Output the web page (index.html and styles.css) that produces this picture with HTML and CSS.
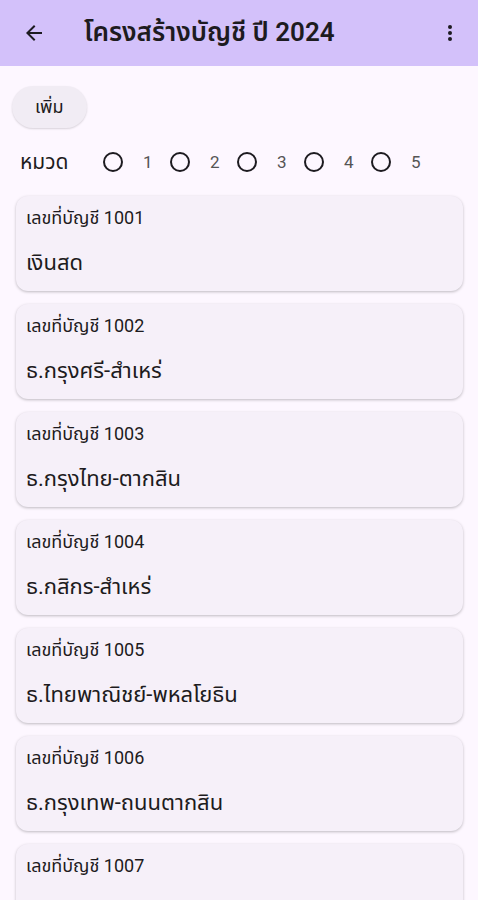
FILE: index.html
```html
<!DOCTYPE html>
<html lang="th">
<head>
    <meta charset="UTF-8">
    <meta name="viewport" content="width=device-width, initial-scale=1.0">
    <title>โครงสร้างบัญชี ปี 2024</title>
    <link rel="stylesheet" href="styles.css">
</head>
<body>
    <header class="appbar">
        <button class="icon-btn" aria-label="back">
            <svg width="24" height="24" viewBox="0 0 24 24"><path d="M20 11H7.83l5.59-5.59L12 4l-8 8 8 8 1.41-1.41L7.83 13H20v-2z" fill="#1d1b20"/></svg>
        </button>
        <h1 class="title">โครงสร้างบัญชี ปี 2024</h1>
        <button class="icon-btn more" aria-label="more">
            <svg width="24" height="24" viewBox="0 0 24 24"><circle cx="12" cy="6" r="2" fill="#1d1b20"/><circle cx="12" cy="12" r="2" fill="#1d1b20"/><circle cx="12" cy="18" r="2" fill="#1d1b20"/></svg>
        </button>
    </header>

    <main class="content">
        <button class="add-btn">เพิ่ม</button>

        <div class="category">
            <span class="cat-label">หมวด</span>
            <label class="radio"><span class="dot"></span>1</label>
            <label class="radio"><span class="dot"></span>2</label>
            <label class="radio"><span class="dot"></span>3</label>
            <label class="radio"><span class="dot"></span>4</label>
            <label class="radio"><span class="dot"></span>5</label>
        </div>

        <div class="list" id="list"></div>
    </main>

    <script>
        let accounts = [
            ["1001", "เงินสด"],
            ["1002", "ธ.กรุงศรี-สำเหร่"],
            ["1003", "ธ.กรุงไทย-ตากสิน"],
            ["1004", "ธ.กสิกร-สำเหร่"],
            ["1005", "ธ.ไทยพาณิชย์-พหลโยธิน"],
            ["1006", "ธ.กรุงเทพ-ถนนตากสิน"],
            ["1007", ""]
        ];
        let list = document.getElementById("list");
        accounts.forEach(a => {
            let card = document.createElement("div");
            card.className = "card";
            card.innerHTML = `<div class="acc-no">เลขที่บัญชี ${a[0]}</div><div class="acc-name">${a[1]}</div>`;
            list.appendChild(card);
        });
    </script>
</body>
</html>
```

FILE: styles.css
```css
body {
    margin: 0;
    background: #fdf7ff;
    font-family: Roboto, "Noto Sans", "Noto Sans Thai", sans-serif;
    color: #1d1b20;
    width: 478px;
    overflow: hidden;
}
.appbar {
    height: 66px;
    background: #d3c1fa;
    display: flex;
    align-items: center;
    padding: 0 12px 0 22px;
}
.icon-btn {
    border: none;
    background: none;
    padding: 0;
    width: 24px;
    height: 24px;
    display: flex;
}
.title {
    flex: 1;
    margin: 0 0 0 38px;
    font-size: 26px;
    font-weight: 600;
}
.more {
    margin-right: 4px;
}
.content {
    padding: 20px 15px 0 12px;
}
.add-btn {
    border: none;
    background: #f1ecf4;
    border-radius: 21px;
    height: 42px;
    padding: 0 23px;
    font-family: inherit;
    font-size: 18px;
    color: #1d1b20;
    box-shadow: 0 1px 2px rgba(0,0,0,0.15);
}
.category {
    display: flex;
    align-items: center;
    margin: 12px 0 0 8px;
    height: 44px;
    font-size: 17px;
}
.cat-label {
    font-size: 21px;
    width: 83px;
}
.radio {
    display: flex;
    align-items: center;
    gap: 20px;
    width: 67px;
    color: #555;
}
.dot {
    width: 16px;
    height: 16px;
    border: 2px solid #1d1b20;
    border-radius: 50%;
}
.list {
    display: flex;
    flex-direction: column;
    gap: 13px;
    margin: 12px 0 0 4px;
}
.card {
    background: #f6f0f9;
    border-radius: 12px;
    height: 95px;
    padding: 9px 10px 0 10px;
    box-sizing: border-box;
    box-shadow: 0 1px 3px rgba(0,0,0,0.25);
}
.acc-no {
    font-size: 18px;
    line-height: 26px;
}
.acc-name {
    font-size: 22px;
    line-height: 32px;
    margin-top: 16px;
}
```
